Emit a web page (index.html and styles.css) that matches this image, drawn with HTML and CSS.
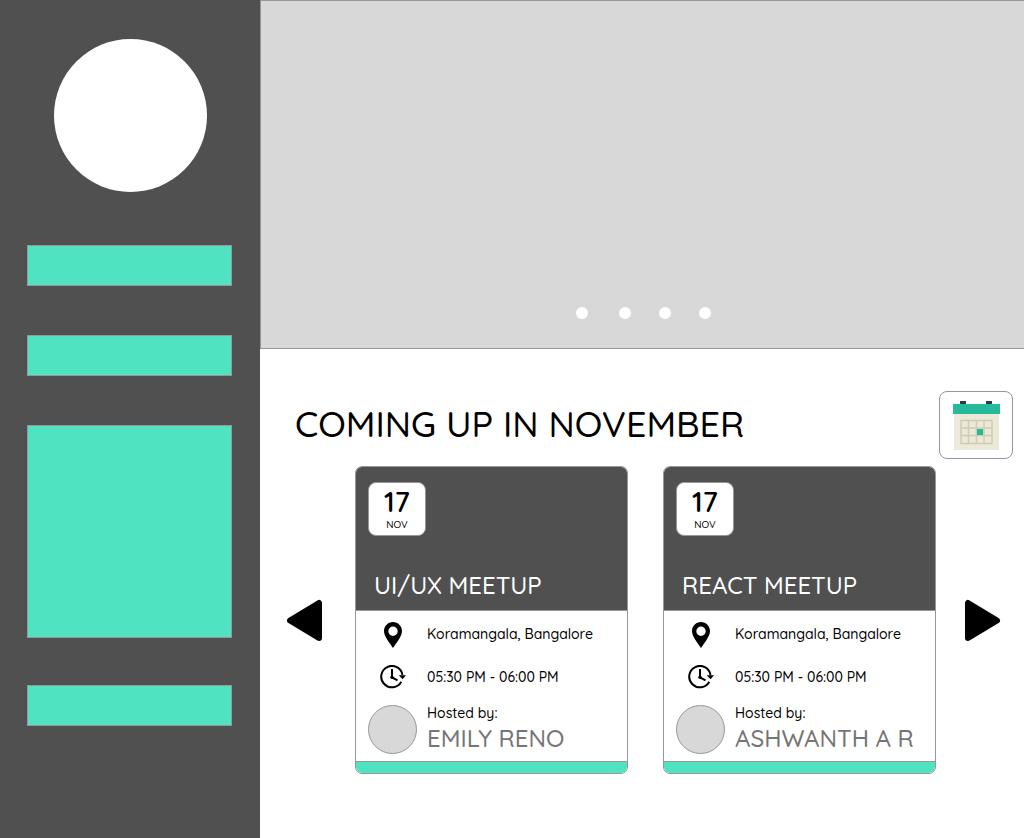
FILE: index.html
```html
<!DOCTYPE html>
<html lang="en">
<head>
<meta charset="utf-8">
<meta name="viewport" content="width=device-width, initial-scale=1">
<title>Meetups</title>
<link rel="stylesheet" href="styles.css">
</head>
<body>
<svg class="sprite" aria-hidden="true">
  <symbol id="pin" viewBox="0 0 18 28"><path fill-rule="evenodd" d="M9 2C4 2 0 6 0 11c0 5.500 5.500 11.500 9 17 3.500-5.500 9-11.500 9-17 0-5-4-9-9-9zM9 6.500a4.700 4.700 0 1 1 0 9.400 4.700 4.700 0 0 1 0-9.400z"/></symbol>
  <symbol id="clock" viewBox="0 0 26 24"><path d="M21.300 16.800A10.700 10.700 0 1 1 22.500 10" fill="none" stroke="#000" stroke-width="2"/><path d="M18.800 10.200h7.200l-3.400 4z"/><path d="M12 4v8.300l5.500 3" fill="none" stroke="#000" stroke-width="2"/><circle cx="12" cy="12.300" r="1.700"/></symbol>
</svg>
<div class="page">
  <aside class="sidebar">
    <div class="logo"></div>
    <div class="block"></div>
    <div class="block"></div>
    <div class="block block-tall"></div>
    <div class="block"></div>
  </aside>
  <main class="main">
    <section class="hero" aria-label="Featured">
      <button class="dot dot-first" aria-label="Slide 1"></button>
      <button class="dot" aria-label="Slide 2"></button>
      <button class="dot" aria-label="Slide 3"></button>
      <button class="dot" aria-label="Slide 4"></button>
    </section>
    <header class="heading">
      <h1 class="title">COMING UP IN NOVEMBER</h1>
      <button class="calendar" aria-label="Open calendar">
        <svg width="48" height="50" viewBox="0 0 48 50">
          <path fill="#ece9d8" d="M2 13h45v37H2z"/>
          <path fill="#26b99a" d="M1 4h47v10H1z"/>
          <path fill="#2b3b4e" d="M8 1h6v3H8zM34 1h6v3h-6z"/>
          <path d="M9 20.500h31v23H9zM9 28h31M9 35.500h31M16.500 20v24M24.500 20v24M32 20v24" fill="none" stroke="#d0ccb3" stroke-width="1.500"/>
          <path fill="#26b99a" d="M25 29h6v6h-6z"/>
        </svg>
      </button>
    </header>
    <section class="carousel" aria-label="Meetups">
      <button class="arrow" aria-label="Previous">
        <svg width="36" height="42" viewBox="0 0 36 42"><path d="M3 21.500 32 4v35z" stroke="#000" stroke-width="6" stroke-linejoin="round"/></svg>
      </button>
      <div class="cards">
        <article class="card">
          <header class="card-head">
            <time class="date"><span class="day">17</span><span class="month">NOV</span></time>
            <h2 class="card-title">UI/UX MEETUP</h2>
          </header>
          <div class="details">
            <svg class="icon" width="18" height="28"><use href="#pin"/></svg>
            <p class="text">Koramangala, Bangalore</p>
            <svg class="icon" width="26" height="24"><use href="#clock"/></svg>
            <p class="text">05:30 PM - 06:00 PM</p>
          </div>
          <div class="host">
            <div class="avatar"></div>
            <div><p class="text">Hosted by:</p><p class="name">EMILY RENO</p></div>
          </div>
          <div class="card-foot"></div>
        </article>
        <article class="card">
          <header class="card-head">
            <time class="date"><span class="day">17</span><span class="month">NOV</span></time>
            <h2 class="card-title">REACT MEETUP</h2>
          </header>
          <div class="details">
            <svg class="icon" width="18" height="28"><use href="#pin"/></svg>
            <p class="text">Koramangala, Bangalore</p>
            <svg class="icon" width="26" height="24"><use href="#clock"/></svg>
            <p class="text">05:30 PM - 06:00 PM</p>
          </div>
          <div class="host">
            <div class="avatar"></div>
            <div><p class="text">Hosted by:</p><p class="name">ASHWANTH A R</p></div>
          </div>
          <div class="card-foot"></div>
        </article>
      </div>
      <button class="arrow" aria-label="Next">
        <svg width="36" height="42" viewBox="0 0 36 42"><path d="M32 21.500 3 4v35z" stroke="#000" stroke-width="6" stroke-linejoin="round"/></svg>
      </button>
    </section>
  </main>
</div>
</body>
</html>
```
FILE: styles.css
```css
* { box-sizing: border-box; }
body { margin: 0; color: #000; background: #fff; font-family: Quicksand, Lato, sans-serif; font-weight: 500; }
h1, h2, p { margin: 0; font-weight: inherit; white-space: nowrap; }
button { padding: 0; border: 0; background: none; font: inherit; cursor: pointer; }
svg { display: block; }
.sprite { position: absolute; width: 0; height: 0; }
.page { display: flex; min-height: 100vh; }
.sidebar { flex: 0 0 260px; display: flex; flex-direction: column; gap: 49px; padding: 39px 28px 39px 27px; background: #505050; }
.logo { align-self: center; width: 153px; height: 153px; margin: 0 0 4px 2px; border-radius: 50%; background: #fff; }
.block { height: 41px; border: 1px solid #979797; background: #50e3c2; }
.block-tall { height: 213px; margin-bottom: -2px; }
.main { flex: 1; min-width: 0; }
.hero { display: flex; justify-content: center; align-items: flex-end; gap: 28px; height: 349px; padding: 0 0 29px 2px; border: 1px solid #979797; border-right: 0; background: #d8d8d8; }
.dot { width: 12px; height: 12px; border-radius: 50%; background: #fff; }
.dot-first { margin-right: 3px; }
.heading { display: flex; justify-content: space-between; align-items: center; padding: 42px 11px 7px 35px; }
.title { padding-bottom: 2px; font-size: 36px; line-height: 44px; }
.calendar { display: flex; justify-content: center; align-items: center; width: 74px; height: 68px; border: 1px solid #979797; border-radius: 8px; background: #fff; }
.carousel { display: flex; align-items: center; gap: 29px; padding: 0 23px 24px 27px; }
.arrow { flex: none; }
.cards { flex: 1; min-width: 0; display: grid; grid-template-columns: 1fr 1fr; gap: 35px; padding-left: 3px; }
.card { overflow: hidden; border: 1px solid #979797; border-radius: 7px; }
.card-head { display: flex; flex-direction: column; justify-content: space-between; align-items: flex-start; height: 144px; padding: 15px 12px 10px; border-bottom: 1px solid #979797; background: #505050; }
.date { display: flex; flex-direction: column; align-items: center; width: 58px; height: 54px; padding-top: 1px; border: 1px solid #979797; border-radius: 8px; background: #fff; }
.day { font-size: 28px; font-weight: 600; line-height: 35px; }
.month { font-size: 10px; line-height: 12px; }
.card-title { padding-left: 6px; color: #fff; font-size: 24px; line-height: 30px; }
.details { display: grid; grid-template-columns: 50px 1fr; grid-template-rows: 43px 43px; align-items: center; padding: 1px 8px 0 12px; column-gap: 9px; }
.icon { justify-self: center; }
.text { font-size: 14px; line-height: 18px; }
.host { display: flex; align-items: center; gap: 10px; padding: 6px 0 7px 12px; }
.avatar { flex: none; width: 49px; height: 49px; border: 1px solid #979797; border-radius: 50%; background: #d8d8d8; }
.name { color: #757575; font-size: 24px; line-height: 32px; }
.card-foot { height: 12px; border-top: 1px solid #979797; background: #50e3c2; }
```
